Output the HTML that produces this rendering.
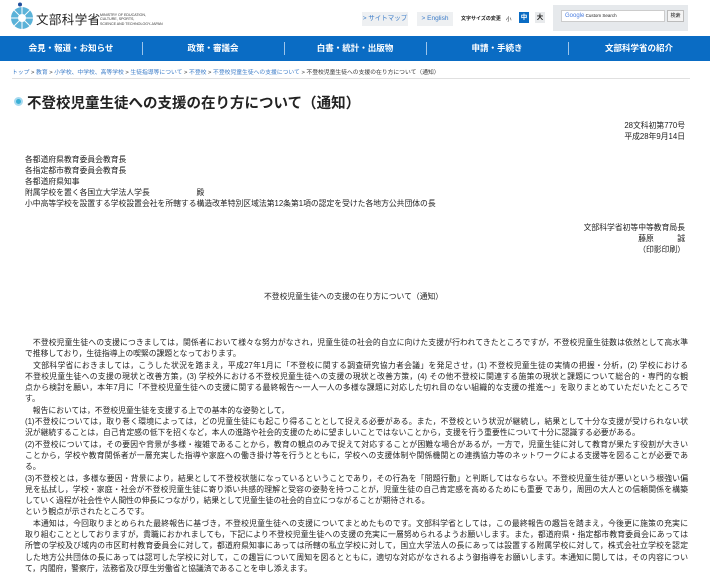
<!DOCTYPE html>
<html><head><meta charset="utf-8">
<style>
*{margin:0;padding:0;box-sizing:border-box}
body{width:710px;height:579px;background:#fff;position:relative;overflow:hidden;font-family:"Liberation Sans","Noto Sans CJK JP",sans-serif;color:#222}
.a{position:absolute;white-space:nowrap}
.nav{position:absolute;left:0;top:36px;width:710px;height:25px;background:#0a6cc4;display:flex}
.nav div{flex:1;color:#fff;font-size:8.5px;font-weight:bold;text-align:center;line-height:25px;position:relative}
.nav div+div:before{content:"";position:absolute;left:0;top:6px;height:13px;border-left:1px solid #9cc4ea}
.body{position:absolute;left:25px;width:663px;font-size:7.8px;line-height:11.3px;color:#222}
.body div{text-align:justify;text-align-last:justify;white-space:nowrap;overflow:hidden;height:11.3px}
.body div.e{text-align-last:left}
.blk{font-size:7.8px;line-height:11px}
</style></head><body>
<svg class="a" style="left:10px;top:1px" width="26" height="29" viewBox="0 0 26 29">
<circle cx="10" cy="3.5" r="2" fill="#1f4e9c"/>
<circle cx="12" cy="17" r="11" fill="#5ab2d8"/>
<g stroke="#fff" stroke-width="1"><line x1="12" y1="6" x2="12" y2="28"/><line x1="1" y1="17" x2="23" y2="17"/><line x1="4.2" y1="9.2" x2="19.8" y2="24.8"/><line x1="19.8" y1="9.2" x2="4.2" y2="24.8"/></g>
<circle cx="12" cy="17" r="4" fill="#fff"/>
</svg>
<div class="a" style="left:36px;top:9px;font-size:12.5px;letter-spacing:0.4px;color:#222">文部科学省</div>
<div class="a" style="left:100px;top:13px;font-size:3.6px;line-height:4.4px;color:#333">MINISTRY OF EDUCATION,<br>CULTURE, SPORTS,<br>SCIENCE AND TECHNOLOGY-JAPAN</div>
<div class="a" style="left:362px;top:12px;width:46px;height:14px;background:#eef0f2;font-size:6.5px;line-height:14px;color:#3a7bc8;text-align:center">&gt; サイトマップ</div>
<div class="a" style="left:417px;top:12px;width:36px;height:14px;background:#eef0f2;font-size:6.5px;line-height:14px;color:#3a7bc8;text-align:center">&gt; English</div>
<div class="a" style="left:461px;top:15px;font-size:5px;font-weight:bold">文字サイズの変更</div>
<div class="a" style="left:506px;top:15px;font-size:5.5px">小</div>
<div class="a" style="left:519px;top:12px;width:10px;height:11px;background:#0a6cc4;color:#fff;font-size:6.5px;font-weight:bold;text-align:center;line-height:11px">中</div>
<div class="a" style="left:535px;top:12px;width:10px;height:11px;background:#e8eaec;font-size:6.5px;font-weight:bold;text-align:center;line-height:11px">大</div>
<div class="a" style="left:553px;top:5px;width:135px;height:26px;background:#e6e9ec"></div>
<div class="a" style="left:561px;top:10px;width:104px;height:12px;background:#fff;border:1px solid #ccc;font-size:4.5px;line-height:10px;padding-left:3px"><span style="color:#4a7de0;font-size:6px">Google</span> Custom Search</div>
<div class="a" style="left:667px;top:10px;width:17px;height:12px;background:#f4f4f4;border:1px solid #bbb;font-size:5px;line-height:10px;text-align:center">検索</div>
<div class="nav"><div>会見・報道・お知らせ</div><div>政策・審議会</div><div>白書・統計・出版物</div><div>申請・手続き</div><div>文部科学省の紹介</div></div>
<div class="a" style="left:12px;top:67px;font-size:5.8px;color:#333"><span style="color:#3a7bc8">トップ</span> &gt; <span style="color:#3a7bc8">教育</span> &gt; <span style="color:#3a7bc8">小学校、中学校、高等学校</span> &gt; <span style="color:#3a7bc8">生徒指導等について</span> &gt; <span style="color:#3a7bc8">不登校</span> &gt; <span style="color:#3a7bc8">不登校児童生徒への支援について</span> &gt; 不登校児童生徒への支援の在り方について（通知）</div>
<div class="a" style="left:12px;top:78px;width:678px;border-top:1px solid #e0e0e0"></div>
<div class="a" style="left:14px;top:97px;width:9px;height:9px;border-radius:50%;background:#3bb0d6;border:2px solid #a8daf0"></div>
<div class="a" style="left:27px;top:92px;font-size:14.5px;font-weight:bold;color:#222">不登校児童生徒への支援の在り方について（通知）</div>
<div class="a blk" style="right:25px;top:120px;text-align:right">28文科初第770号<br>平成28年9月14日</div>
<div class="a blk" style="left:25px;top:154px">各都道府県教育委員会教育長<br>各指定都市教育委員会教育長<br>各都道府県知事<br>附属学校を置く各国立大学法人学長　　　　　　殿<br>小中高等学校を設置する学校設置会社を所轄する構造改革特別区域法第12条第1項の認定を受けた各地方公共団体の長</div>
<div class="a blk" style="right:25px;top:222px;text-align:right">文部科学省初等中等教育局長<br>藤原　　　誠<br>（印影印刷）</div>
<div class="a blk" style="left:264px;top:291px">不登校児童生徒への支援の在り方について（通知）</div>
<div class="body" style="top:337px">
<div>　不登校児童生徒への支援につきましては，関係者において様々な努力がなされ，児童生徒の社会的自立に向けた支援が行われてきたところですが，不登校児童生徒数は依然として高水準</div>
<div class="e">で推移しており，生徒指導上の喫緊の課題となっております。</div>
<div>　文部科学省におきましては，こうした状況を踏まえ，平成27年1月に「不登校に関する調査研究協力者会議」を発足させ，(1) 不登校児童生徒の実情の把握・分析，(2) 学校における</div>
<div>不登校児童生徒への支援の現状と改善方策，(3) 学校外における不登校児童生徒への支援の現状と改善方策，(4) その他不登校に関連する施策の現状と課題について総合的・専門的な観</div>
<div>点から検討を願い，本年7月に「不登校児童生徒への支援に関する最終報告～一人一人の多様な課題に対応した切れ目のない組織的な支援の推進～」を取りまとめていただいたところで</div>
<div class="e">す。</div>
<div class="e">　報告においては，不登校児童生徒を支援する上での基本的な姿勢として，</div>
<div>(1)不登校については，取り巻く環境によっては，どの児童生徒にも起こり得ることとして捉える必要がある。また，不登校という状況が継続し，結果として十分な支援が受けられない状</div>
<div class="e">況が継続することは，自己肯定感の低下を招くなど，本人の進路や社会的支援のために望ましいことではないことから，支援を行う重要性について十分に認識する必要がある。</div>
<div>(2)不登校については，その要因や背景が多様・複雑であることから，教育の観点のみで捉えて対応することが困難な場合があるが，一方で，児童生徒に対して教育が果たす役割が大きい</div>
<div>ことから，学校や教育関係者が一層充実した指導や家庭への働き掛け等を行うとともに，学校への支援体制や関係機関との連携協力等のネットワークによる支援等を図ることが必要であ</div>
<div class="e">る。</div>
<div>(3)不登校とは，多様な要因・背景により，結果として不登校状態になっているということであり，その行為を「問題行動」と判断してはならない。不登校児童生徒が悪いという根強い偏</div>
<div>見を払拭し，学校・家庭・社会が不登校児童生徒に寄り添い共感的理解と受容の姿勢を持つことが，児童生徒の自己肯定感を高めるためにも重要 であり，周囲の大人との信頼関係を構築</div>
<div class="e">していく過程が社会性や人間性の伸長につながり，結果として児童生徒の社会的自立につながることが期待される。</div>
<div class="e">という観点が示されたところです。</div>
<div>　本通知は，今回取りまとめられた最終報告に基づき，不登校児童生徒への支援についてまとめたものです。文部科学省としては，この最終報告の趣旨を踏まえ，今後更に施策の充実に</div>
<div>取り組むこととしておりますが，貴職におかれましても，下記により不登校児童生徒への支援の充実に一層努められるようお願いします。また，都道府県・指定都市教育委員会にあっては</div>
<div>所管の学校及び域内の市区町村教育委員会に対して，都道府県知事にあっては所轄の私立学校に対して，国立大学法人の長にあっては設置する附属学校に対して，株式会社立学校を認定</div>
<div>した地方公共団体の長にあっては認可した学校に対して，この趣旨について周知を図るとともに，適切な対応がなされるよう御指導をお願いします。本通知に関しては，その内容につい</div>
<div class="e">て，内閣府，警察庁，法務省及び厚生労働省と協議済であることを申し添えます。</div>
</div>
</body></html>
